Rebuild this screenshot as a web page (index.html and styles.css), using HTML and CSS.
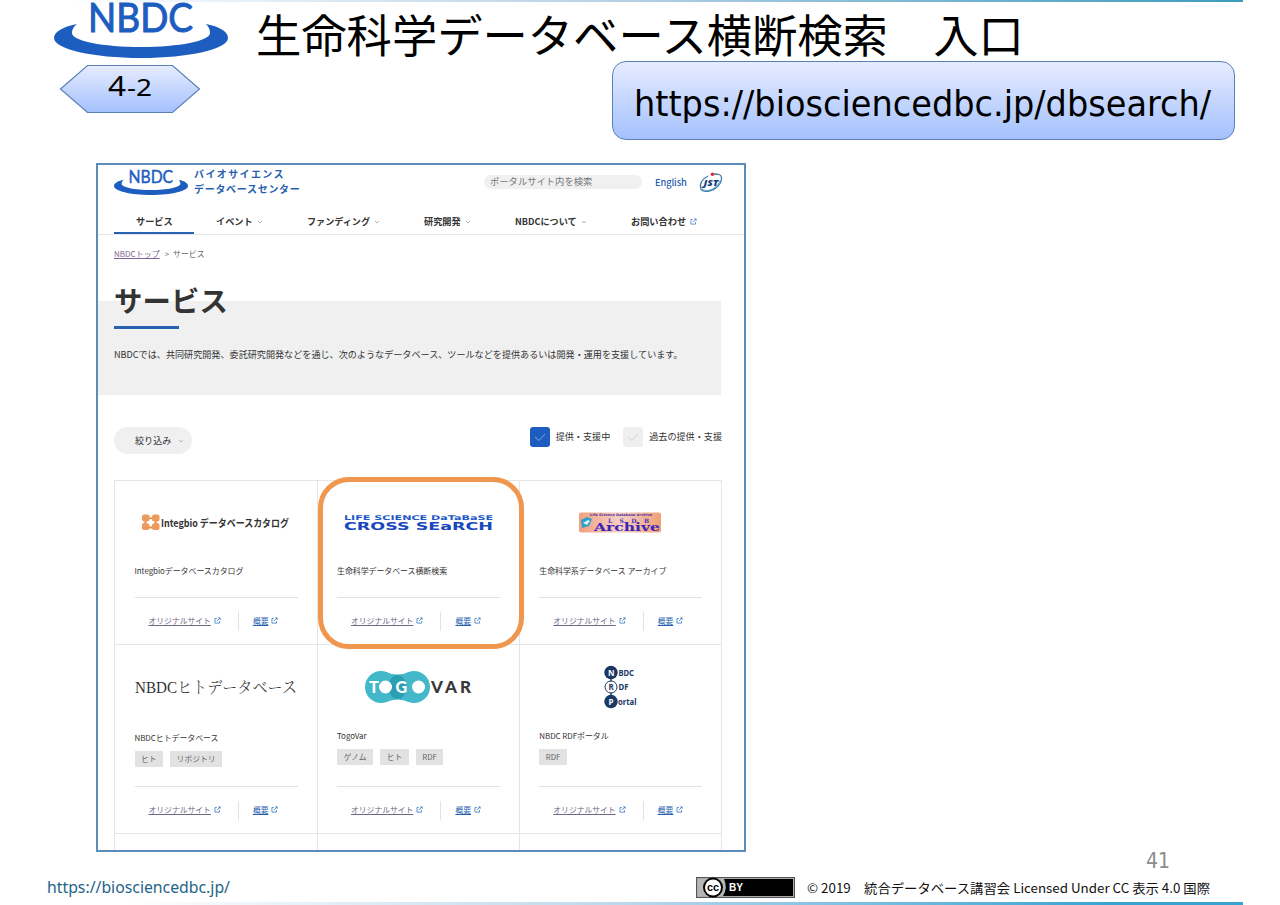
FILE: index.html
```html
<!DOCTYPE html>
<html lang="ja">
<head>
<meta charset="utf-8">
<title>生命科学データベース横断検索 入口</title>
<link rel="stylesheet" href="styles.css">
</head>
<body>
<svg class="defs" aria-hidden="true">
  <symbol id="ext" viewBox="0 0 8 8"><path d="M3.2 1.7H1.1V7H6.3V4.7M4.7 1H7V3.3M7 1L3.5 4.5" fill="none" stroke="currentColor" stroke-width=".9"/></symbol>
  <symbol id="chev" viewBox="0 0 6 4"><path d="M1 1l2 2 2-2" fill="none" stroke="#aaa" stroke-width=".9"/></symbol>
  <symbol id="check" viewBox="0 0 20 20"><path d="M5 10l4 3.500L15 7" fill="none" stroke="currentColor" stroke-width="1"/></symbol>
  <symbol id="nbdc" viewBox="0 0 174 58" overflow="visible">
    <path d="M23 24C8 27 0 32 0 38C0 49 39 58 87 58S174 49 174 38C174 32 167 27 152 24C155 27 156 30 156 33C156 41 125 47 87 47S18 41 18 33C18 30 19 27 23 24Z" fill="#1d5dbf"/>
    <text x="34" y="31.500" textLength="105" lengthAdjust="spacingAndGlyphs" class="nbdc-text">NBDC</text>
  </symbol>
</svg>
<main class="slide">
  <div class="rule rule-top"></div>
  <header class="head">
    <div class="brand">
      <svg class="logo" width="174" height="58"><use href="#nbdc" width="174" height="58"/></svg>
      <svg class="hex" width="142" height="50" viewBox="0 0 142 50">
        <defs><linearGradient id="hg" x2="0" y2="1"><stop stop-color="#e6ecff"/><stop offset="1" stop-color="#a4c1fd"/></linearGradient></defs>
        <path d="M1.500 25L28.500 1.500H113.500L140.500 25L113.500 48.500H28.500Z" fill="url(#hg)" stroke="#5a80b8" stroke-width="1.200"/>
        <text x="49" y="32" textLength="18" lengthAdjust="spacingAndGlyphs" class="hex-a">4</text><text x="68" y="32" textLength="25" lengthAdjust="spacingAndGlyphs" class="hex-b">-2</text>
      </svg>
    </div>
    <div class="titles">
      <h1 class="title">生命科学データベース横断検索　入口</h1>
      <div class="url">
        <svg width="580" height="54"><text x="0" y="37.500" textLength="577" lengthAdjust="spacingAndGlyphs" class="url-text">https://biosciencedbc.jp/dbsearch/</text></svg>
      </div>
    </div>
  </header>

  <section class="shot">
    <div class="topbar">
      <svg class="mini" width="74" height="26" viewBox="0 0 174 58" preserveAspectRatio="none"><use href="#nbdc" width="174" height="58"/></svg>
      <div class="org"><div class="org1">バイオサイエンス</div><div class="org2">データベースセンター</div></div>
      <div class="search">ポータルサイト内を検索</div>
      <a class="english">English</a>
      <svg class="jst" width="24" height="22" viewBox="0 0 24 22">
        <path d="M9 4C3 7 0 12 2 17C4 21 13 20 19 14C23 10 24 4 20 2.500C18 1.800 15 2 13 2.700" fill="none" stroke="#3c7fae" stroke-width="1.300"/>
        <path d="M3 17C8 21 17 17 21 9" fill="none" stroke="#4b91b8" stroke-width=".8"/>
        <text x="4.500" y="14" textLength="15" lengthAdjust="spacingAndGlyphs" class="jst-text">JST</text>
        <circle cx="13.500" cy="2.300" r="1.800" fill="#e02b3c"/>
      </svg>
    </div>
    <nav class="nav">
      <div class="tab on">サービス</div>
      <div class="tab t2">イベント<svg><use href="#chev"/></svg></div>
      <div class="tab t3">ファンディング<svg><use href="#chev"/></svg></div>
      <div class="tab t4">研究開発<svg><use href="#chev"/></svg></div>
      <div class="tab t5">NBDCについて<svg><use href="#chev"/></svg></div>
      <div class="tab t6">お問い合わせ<svg class="ext"><use href="#ext"/></svg></div>
    </nav>
    <div class="crumb"><a>NBDCトップ</a><span>&gt;</span>サービス</div>
    <div class="hero">
      <h2>サービス</h2>
      <div class="bar"></div>
      <p>NBDCでは、共同研究開発、委託研究開発などを通じ、次のようなデータベース、ツールなどを提供あるいは開発・運用を支援しています。</p>
    </div>
    <div class="filters">
      <div class="pill">絞り込み<svg><use href="#chev"/></svg></div>
      <div class="checks">
        <svg class="box checked"><use href="#check"/></svg><span class="l1">提供・支援中</span>
        <svg class="box"><use href="#check"/></svg><span>過去の提供・支援</span>
      </div>
    </div>
    <div class="grid">
      <article class="card">
        <div class="pic"><svg width="150" height="40" viewBox="0 0 150 40">
          <path d="M4.500 16.500h10v9h-10z" fill="none" stroke="#e58942" stroke-width="2"/>
          <g fill="#ee9a5c"><rect x="1" y="12.500" width="7.500" height="7" rx="2"/><rect x="11" y="12.500" width="7.500" height="7" rx="2"/><rect x="1" y="21" width="7.500" height="7" rx="2"/><rect x="11" y="21" width="7.500" height="7" rx="2"/></g>
          <path d="M9.800 17v7M6.500 20.500h6.500" stroke="#fff" stroke-width="2.400"/>
          <text x="20" y="24.500" textLength="128" lengthAdjust="spacingAndGlyphs" class="integ">Integbio データベースカタログ</text></svg></div>
        <div class="name">Integbioデータベースカタログ</div>
        <div class="links"><a class="site">オリジナルサイト</a><svg><use href="#ext"/></svg><i></i><a>概要</a><svg><use href="#ext"/></svg></div>
      </article>
      <article class="card">
        <div class="pic"><svg width="150" height="40" viewBox="0 0 150 40">
          <text x="1" y="17.500" textLength="149" lengthAdjust="spacingAndGlyphs" class="cs1">LIFE SCIENCE DaTaBaSE</text>
          <text x="1" y="27.800" textLength="149" lengthAdjust="spacingAndGlyphs" class="cs2">CROSS SEaRCH</text></svg></div>
        <div class="name">生命科学データベース横断検索</div>
        <div class="links"><a class="site">オリジナルサイト</a><svg><use href="#ext"/></svg><i></i><a>概要</a><svg><use href="#ext"/></svg></div>
        <div class="highlight"></div>
      </article>
      <article class="card">
        <div class="pic"><svg width="84" height="40" viewBox="0 0 84 40">
          <defs><linearGradient id="lg"><stop stop-color="#f1a080"/><stop offset=".5" stop-color="#f6cfc6"/><stop offset="1" stop-color="#f0a077"/></linearGradient></defs>
          <rect x="1" y="10.500" width="82" height="20" rx="2" fill="url(#lg)"/>
          <path d="M3 18l6-3 5 2-3 7-7 2z" fill="#2d9fc9"/><path d="M5 21l5-3 2 1-3 4z" fill="#d8f3fa"/>
          <text x="12" y="14" textLength="62" lengthAdjust="spacingAndGlyphs" class="ls1">Life Science Database Archive</text>
          <text x="30" y="20.500" textLength="41" class="ls2">LSDB</text>
          <text x="16" y="29.200" textLength="66" lengthAdjust="spacingAndGlyphs" class="ls3">Archive</text></svg></div>
        <div class="name n3">生命科学系データベース アーカイブ</div>
        <div class="links"><a class="site">オリジナルサイト</a><svg><use href="#ext"/></svg><i></i><a>概要</a><svg><use href="#ext"/></svg></div>
      </article>
      <article class="card second">
        <div class="pic"><svg width="164" height="40" viewBox="0 0 164 40"><text x="1" y="25.500" textLength="162" lengthAdjust="spacingAndGlyphs" class="human">NBDCヒトデータベース</text></svg></div>
        <div class="name low">NBDCヒトデータベース</div>
        <div class="tags"><span>ヒト</span><span>リポジトリ</span></div>
        <div class="links"><a class="site">オリジナルサイト</a><svg><use href="#ext"/></svg><i></i><a>概要</a><svg><use href="#ext"/></svg></div>
      </article>
      <article class="card second">
        <div class="pic"><svg width="108" height="40" viewBox="0 0 108 40">
          <circle cx="17" cy="20" r="16" fill="#43b8ca"/><circle cx="50" cy="20" r="16" fill="#43b8ca"/><path d="M22 5q11.500 5 23 0v30q-11.500-5-23 0z" fill="#43b8ca"/>
          <ellipse cx="33.500" cy="20" rx="9" ry="12" fill="#2a9fb1"/>
          <circle cx="21.500" cy="20" r="6.500" fill="#fff"/><circle cx="54.500" cy="20" r="6.500" fill="#fff"/>
          <text x="5" y="25.500" class="togo">T</text><text x="31.500" y="25.500" class="togo">G</text>
          <text x="67" y="25.500" textLength="40" class="var">VAR</text></svg></div>
        <div class="name">TogoVar</div>
        <div class="tags"><span>ゲノム</span><span>ヒト</span><span>RDF</span></div>
        <div class="links"><a class="site">オリジナルサイト</a><svg><use href="#ext"/></svg><i></i><a>概要</a><svg><use href="#ext"/></svg></div>
      </article>
      <article class="card second">
        <div class="pic"><svg width="32" height="42" viewBox="0 0 32 42">
          <path d="M7 6v29" stroke="#1b3766" stroke-width="1.500"/>
          <circle cx="7" cy="6.500" r="6.700" fill="#1b3766"/><circle cx="7" cy="21" r="6" fill="#fff" stroke="#1b3766"/><circle cx="7" cy="35.500" r="6.700" fill="#1b3766"/>
          <g class="rdf"><text x="4" y="9.500" fill="#fff">N</text><text x="4.500" y="24">R</text><text x="4.500" y="38.500" fill="#fff">P</text>
          <text x="14.500" y="9.500" textLength="15.500" lengthAdjust="spacingAndGlyphs">BDC</text><text x="14.500" y="24" textLength="10" lengthAdjust="spacingAndGlyphs">DF</text><text x="14" y="38.500" textLength="18.500" lengthAdjust="spacingAndGlyphs">ortal</text></g></svg></div>
        <div class="name">NBDC RDFポータル</div>
        <div class="tags"><span>RDF</span></div>
        <div class="links"><a class="site">オリジナルサイト</a><svg><use href="#ext"/></svg><i></i><a>概要</a><svg><use href="#ext"/></svg></div>
      </article>
      <div class="card"></div><div class="card"></div><div class="card"></div>
    </div>
  </section>

  <footer class="foot">
    <div class="page">41</div>
    <div class="row">
      <svg class="foot-url" width="190" height="24"><text x="0" y="16" textLength="183" lengthAdjust="spacingAndGlyphs">https://biosciencedbc.jp/</text></svg>
      <svg class="cc" width="99" height="21" viewBox="0 0 99 21">
        <rect width="99" height="21" fill="#555"/><rect x="1" y="1" width="97" height="19" fill="#aaa"/><rect x="2" y="2" width="95" height="17" fill="#000"/>
        <path d="M2 2h26q4 8.500-1 17H2z" fill="#b4b8b2"/>
        <circle cx="17" cy="10.500" r="10" fill="#000"/><circle cx="17" cy="10.500" r="8" fill="#fff"/>
        <text x="11" y="14" textLength="12" lengthAdjust="spacingAndGlyphs" class="cc-a">cc</text>
        <text x="33" y="14" textLength="14" lengthAdjust="spacingAndGlyphs" class="cc-b">BY</text>
      </svg>
      <svg class="copy" width="406" height="24"><text x="1" y="15.500" textLength="403" lengthAdjust="spacingAndGlyphs">© 2019　統合データベース講習会 Licensed Under CC 表示 4.0 国際</text></svg>
    </div>
  </footer>
  <div class="rule rule-bottom"></div>
</main>
</body>
</html>
```

FILE: styles.css
```css
* { box-sizing: border-box; }
body { margin: 0; background: #fff; color: #333; font-family: "Noto Sans CJK JP", sans-serif; }
.defs { position: absolute; width: 0; height: 0; }
svg { display: block; flex: none; overflow: visible; }
h1, h2, p { margin: 0; white-space: nowrap; }

.slide { position: relative; width: 1280px; height: 905px; overflow: hidden; display: flex; flex-direction: column; }
.rule { position: absolute; left: 0; width: 1243px; }
.rule-top { top: 0; height: 1.500px; background: linear-gradient(90deg, #fff 5%, #b5d0e6 50%, #3c9cbb); }
.rule-bottom { top: 902px; height: 2.500px; background: linear-gradient(90deg, #fff 10%, #bcd8ec 50%, #36a3d0 90%); }

.head { display: flex; height: 163px; flex: none; }
.brand { width: 256px; padding-left: 54px; }
.hex { margin: 6px 0 0 5px; }
.nbdc-text { font: 40px Lato, sans-serif; fill: #1d5dbf; stroke: #1d5dbf; stroke-width: 1px; }
.hex-a { font: 28px "Noto Sans", sans-serif; fill: #000; }
.hex-b { font: 23px "Noto Sans", sans-serif; fill: #000; }
.title { height: 61px; font-size: 45.300px; font-weight: 400; line-height: 67px; color: #000; }
.url { width: 623px; height: 79px; margin-left: 356px; padding: 17px 21px; border: 1.500px solid #5a80b8; border-radius: 14px; background: linear-gradient(#e6ecff, #a4c1fd); }
.url svg { margin-top: -1px; }
.url-text { font: 35px "DejaVu Sans Condensed", "DejaVu Sans", sans-serif; fill: #000; }

.shot { width: 650px; height: 689px; margin-left: 96px; border: 2px solid #5c8cba; overflow: hidden; flex: none; background: #fff; }
.topbar { display: flex; height: 38px; padding: 3px 0 0 16px; }
.mini { margin-top: 1px; }
.org { width: 290px; padding-left: 6px; color: #2861b0; font-weight: 700; font-size: 10px; line-height: 15px; white-space: nowrap; margin-top: -2px; }
.org1 { letter-spacing: 1.400px; }
.org2 { letter-spacing: .7px; }
.search { width: 158px; height: 14px; margin: 7px 13px 0 6px; padding-left: 6px; border-radius: 7px; background: #f0f0f1; color: #777; font-size: 9.300px; line-height: 12px; white-space: nowrap; }
.english { width: 44px; margin-top: 6px; color: #2861b0; font-size: 9.300px; line-height: 16px; font-weight: 500; letter-spacing: -.1px; }
.jst { margin-top: 4px; }
.jst-text { font: italic 800 9.500px "Open Sans", sans-serif; fill: #173f7c; }

.nav { display: flex; height: 32px; padding-left: 16px; border-bottom: 1px solid #e4e6e8; font-size: 9.200px; font-weight: 700; line-height: 17px; }
.tab { display: flex; height: 31px; padding-top: 10px; white-space: nowrap; }
.tab svg { width: 6px; height: 4px; margin: 7px 0 0 4px; }
.tab svg.ext { width: 7px; height: 7px; margin-top: 5px; color: #4a7fc1; }
.on { width: 80px; padding-left: 22px; border-bottom: 2px solid #2861b0; }
.t2 { width: 113px; padding-left: 22px; }
.t3 { width: 117px; font-size: 9.100px; }
.t4 { width: 91px; }
.t5 { width: 116px; font-size: 9.100px; }

.crumb { display: flex; height: 66px; padding: 10px 0 0 16px; font-size: 7.900px; line-height: 17px; color: #666; }
.crumb a { color: #7b6592; text-decoration: underline; font-size: 8px; }
.crumb span { margin: 0 4px 0 5px; }
.hero { display: flow-root; width: 623px; height: 94px; padding-left: 16px; background: #f0f0f1; }
.hero h2 { height: 25px; margin-top: -1px; font-size: 28.400px; line-height: 0; font-weight: 700; color: #333; letter-spacing: .1px; }
.bar { width: 65px; height: 3px; margin-top: 1px; background: #2861b0; }
.hero p { margin-top: 16px; font-size: 9.100px; line-height: 18px; }

.filters { display: flex; justify-content: space-between; height: 84.500px; padding: 32px 22px 0 16px; font-size: 9.100px; }
.pill { display: flex; width: 78px; height: 27px; padding-left: 21px; border-radius: 14px; background: #f0f0f1; line-height: 26px; }
.pill svg { width: 6px; height: 4px; margin: 12px 0 0 7px; }
.checks { display: flex; line-height: 19px; white-space: nowrap; }
.box { width: 20px; height: 20px; margin-right: 6px; border-radius: 3px; background: #efefef; color: #d2d2d2; }
.checked { background: #1d5dbf; color: #7fa9df; }
.l1 { margin-right: 13px; }

.grid { display: grid; width: 608px; margin-left: 16px; grid-template: 164px 189px 20px / 202.500px 202.300px 202.200px; border: solid #e3e5e7; border-width: 1px 0 0 1px; }
.card { position: relative; display: flex; flex-direction: column; padding: 0 19.500px; border: solid #e3e5e7; border-width: 0 1px 1px 0; }
.pic { display: flex; height: 83px; align-items: center; justify-content: center; margin-bottom: -3px; }
.second .pic { height: 85px; margin-bottom: -4px; }
.name { font-size: 7.950px; line-height: 20px; letter-spacing: -.05px; white-space: nowrap; height: 20px; }
.low { padding-top: 2px; margin-bottom: 2px; }
.tags { display: flex; gap: 7px; margin-top: 3px; }
.tags span { height: 16px; padding: 0 6.500px; background: #e2e2e2; color: #666; font-size: 7.800px; line-height: 15px; }
.links { display: flex; width: 163px; height: 47px; margin-top: auto; padding: 14px 0 0 14px; border-top: 1px solid #e0e2e4; font-size: 7.800px; line-height: 17px; color: #3a76c0; white-space: nowrap; }
.links a { color: #2861b0; text-decoration: underline; }
.links .site { color: #6f6886; }
.links svg { width: 7px; height: 7px; margin: 5px 0 0 3px; }
.links i { width: 1px; height: 19px; margin: 0 14px 0 17px; background: #e0e2e4; }
.highlight { position: absolute; left: 0; top: -4px; width: 206px; height: 172px; border: 5px solid #ef974e; border-radius: 31px; z-index: 2; }
.integ { font: 700 10px "Noto Sans CJK JP", sans-serif; fill: #333; }
.cs1 { font: 700 6.500px "DejaVu Sans", sans-serif; fill: #2058c8; }
.cs2 { font: 700 10.500px "DejaVu Sans", sans-serif; fill: #1748bd; }
.ls1 { font: italic 700 3.500px "DejaVu Sans", sans-serif; fill: #5432a0; }
.ls2 { font: 700 6px "DejaVu Serif", serif; fill: #4931bb; }
.ls3 { font: 700 11px "DejaVu Serif", serif; fill: #3b25b5; }
.human { font: 16px "Liberation Serif", "Noto Serif CJK JP", "Noto Sans CJK JP", serif; fill: #333; font-weight: 300; }
.togo { font: 900 16px Lato, sans-serif; fill: #fff; }
.var { font: 900 17px Lato, sans-serif; fill: #383838; }
.rdf { font: 700 8px "Noto Sans", sans-serif; fill: #1b3766; }

.foot { height: 50px; }
.page { height: 25px; padding: 0 110px 0 0; text-align: right; font: 21px/19px "DejaVu Sans Condensed", sans-serif; color: #8c8c8c; }
.row { display: flex; padding-left: 47px; }
.foot-url { margin-right: 459px; font: 16px "Noto Sans", sans-serif; fill: #1e6488; }
.copy { margin-left: 11px; font: 13px "Noto Sans CJK JP", sans-serif; fill: #111; }
.cc-a { font: 700 11px "Liberation Sans", sans-serif; }
.cc-b { font: 700 10px "Liberation Sans", sans-serif; fill: #fff; }
```
